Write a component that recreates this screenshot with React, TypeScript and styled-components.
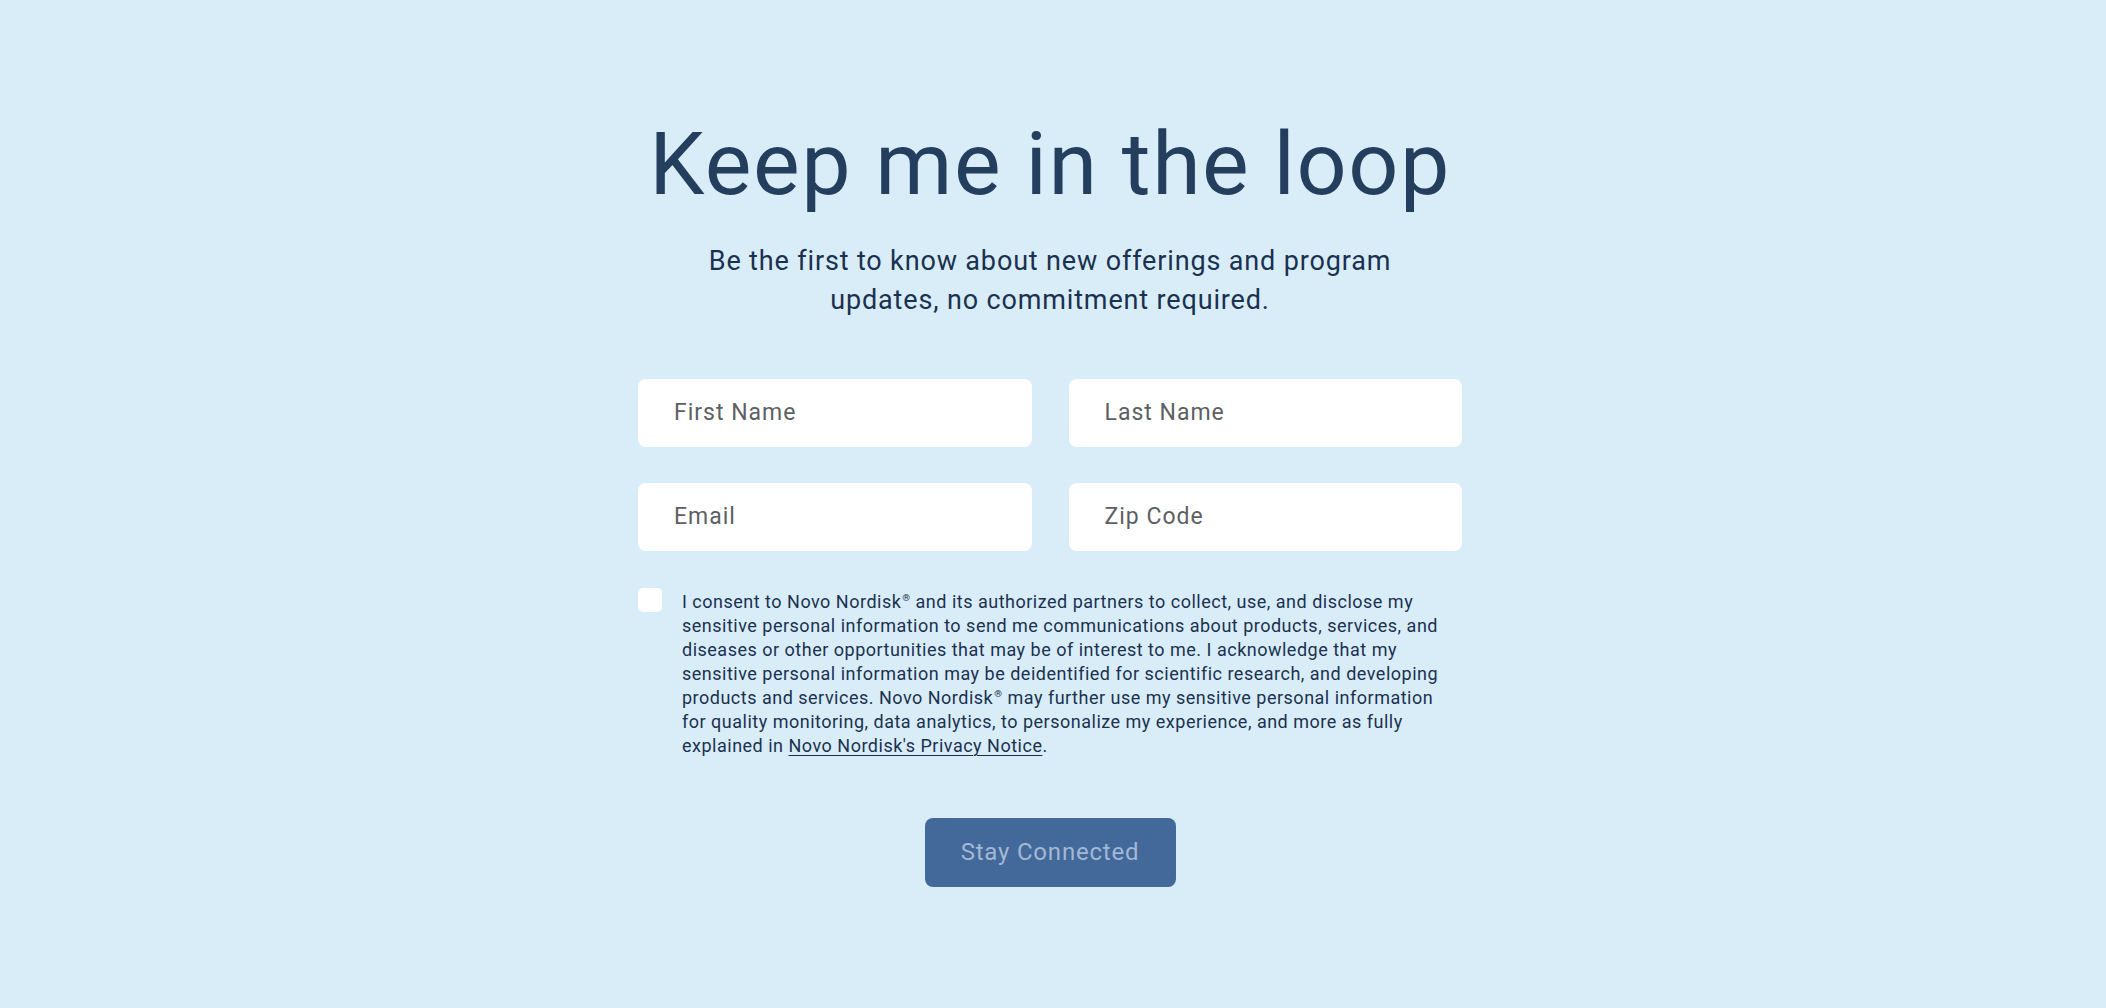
import React from "react";
import styled, { createGlobalStyle } from "styled-components";

const GlobalStyle = createGlobalStyle`
  html, body {
    margin: 0;
    padding: 0;
    background-color: #d9edf8;
  }

  body {
    font-family: Roboto, "Liberation Sans", Arial, sans-serif;
    color: #1b3150;
  }

  * {
    box-sizing: border-box;
  }
`;

const Section = styled.section`
  min-height: 1008px;
  background-color: #d9edf8;
  padding: 116px 20px 60px 14px;
  display: flex;
  justify-content: center;
`;

const Container = styled.div`
  width: 824px;
  display: flex;
  flex-direction: column;
  align-items: center;
`;

const Heading = styled.h2`
  margin: 0;
  font-size: 88px;
  font-weight: 400;
  line-height: 1.1;
  letter-spacing: 1.5px;
  color: #243e5e;
  text-align: center;
  white-space: nowrap;
`;

const Subtitle = styled.p`
  margin: 29px 0 0;
  max-width: 740px;
  font-size: 27px;
  line-height: 39px;
  letter-spacing: 0.85px;
  color: #1b3150;
  text-align: center;
`;

const Form = styled.form`
  width: 100%;
  margin-top: 59px;
  display: flex;
  flex-direction: column;
`;

const FieldGrid = styled.div`
  display: grid;
  grid-template-columns: 1fr 1fr;
  column-gap: 37px;
  row-gap: 36px;
`;

const Input = styled.input`
  height: 68px;
  width: 100%;
  border: none;
  border-radius: 8px;
  background-color: #ffffff;
  padding: 0 36px 0 36px;
  font-family: Roboto, "Liberation Sans", Arial, sans-serif;
  font-size: 23px;
  letter-spacing: 1px;
  color: #1b3150;
  outline: none;

  &::placeholder {
    color: #5d5f63;
  }
`;

const ConsentRow = styled.label`
  margin-top: 36px;
  display: flex;
  align-items: flex-start;
  gap: 20px;
  cursor: pointer;
`;

const Checkbox = styled.input.attrs({ type: "checkbox" })`
  appearance: none;
  flex: 0 0 auto;
  width: 24px;
  height: 24px;
  margin: 1px 0 0;
  border-radius: 5px;
  background-color: #ffffff;
  border: none;
  cursor: pointer;
`;

const ConsentText = styled.span`
  max-width: 765px;
  margin-top: 3px;
  font-size: 18px;
  line-height: 24px;
  letter-spacing: 0.5px;
  color: #1b3150;
`;

const Reg = styled.sup`
  font-size: 0.55em;
  line-height: 0;
  vertical-align: 0.7em;
  margin-left: 1px;
`;

const PrivacyLink = styled.a`
  color: #1b3150;
  text-decoration: underline;
  text-underline-offset: 3px;
  text-decoration-thickness: 1px;
`;

const ButtonRow = styled.div`
  margin-top: 60px;
  display: flex;
  justify-content: center;
`;

const SubmitButton = styled.button`
  width: 251px;
  height: 69px;
  border: none;
  border-radius: 8px;
  background-color: #43689a;
  color: #a2b8d4;
  font-family: Roboto, "Liberation Sans", Arial, sans-serif;
  font-size: 24px;
  letter-spacing: 0.8px;
  cursor: not-allowed;
`;

const App: React.FC = () => {
  return (
    <>
      <GlobalStyle />
      <Section>
        <Container>
          <Heading>Keep me in the loop</Heading>
          <Subtitle>
            Be the first to know about new offerings and program updates, no commitment required.
          </Subtitle>
          <Form onSubmit={(e) => e.preventDefault()}>
            <FieldGrid>
              <Input placeholder="First Name" />
              <Input placeholder="Last Name" />
              <Input placeholder="Email" type="email" />
              <Input placeholder="Zip Code" />
            </FieldGrid>
            <ConsentRow>
              <Checkbox />
              <ConsentText>
                I consent to Novo Nordisk<Reg>®</Reg> and its authorized partners to collect, use, and
                disclose my sensitive personal information to send me communications about products,
                services, and diseases or other opportunities that may be of interest to me. I acknowledge
                that my sensitive personal information may be deidentified for scientific research, and
                developing products and services. Novo Nordisk<Reg>®</Reg> may further use my sensitive
                personal information for quality monitoring, data analytics, to personalize my experience,
                and more as fully explained in{" "}
                <PrivacyLink href="#">Novo Nordisk's Privacy Notice</PrivacyLink>.
              </ConsentText>
            </ConsentRow>
            <ButtonRow>
              <SubmitButton type="submit" disabled>
                Stay Connected
              </SubmitButton>
            </ButtonRow>
          </Form>
        </Container>
      </Section>
    </>
  );
};

export default App;
